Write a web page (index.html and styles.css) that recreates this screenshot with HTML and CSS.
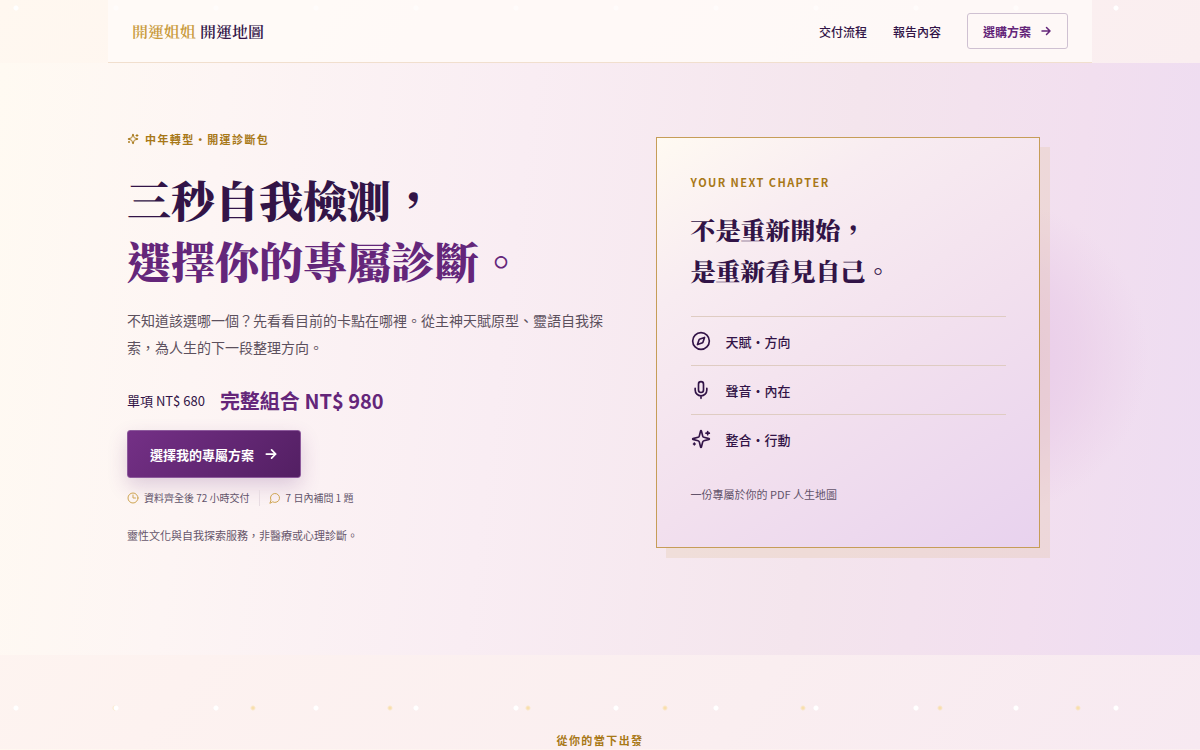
FILE: index.html
```html
<!DOCTYPE html>
<html lang="zh-Hant">
<head>
<meta charset="utf-8">
<meta name="viewport" content="width=device-width, initial-scale=1">
<title>開運姐姐 開運地圖</title>
<link rel="stylesheet" href="styles.css">
</head>
<body>
<svg class="sprite" aria-hidden="true">
  <symbol id="sparkles" viewBox="0 0 24 24"><path d="M9.94 15.5A2 2 0 0 0 8.5 14.06l-6.14-1.58a.5.5 0 0 1 0-.96L8.5 9.94A2 2 0 0 0 9.94 8.5l1.58-6.14a.5.5 0 0 1 .96 0L14.06 8.5a2 2 0 0 0 1.44 1.44l6.14 1.58a.5.5 0 0 1 0 .96L15.5 14.06a2 2 0 0 0-1.44 1.44l-1.58 6.14a.5.5 0 0 1-.96 0zM20 3v4M22 5h-4M4 17v2M5 18H3"/></symbol>
  <symbol id="arrow" viewBox="0 0 24 24"><path d="M4 12h16M13 5l7 7-7 7"/></symbol>
  <symbol id="clock" viewBox="0 0 24 24"><circle cx="12" cy="12" r="10"/><path d="M12 6v6h5"/></symbol>
  <symbol id="message" viewBox="0 0 24 24"><path d="M7.9 20A9 9 0 1 0 4 16.1L2 22z"/></symbol>
  <symbol id="compass" viewBox="0 0 24 24"><circle cx="12" cy="12" r="10"/><path d="m16.24 7.76-1.8 5.41a2 2 0 0 1-1.27 1.27l-5.41 1.8 1.8-5.41a2 2 0 0 1 1.27-1.27z"/></symbol>
  <symbol id="mic" viewBox="0 0 24 24"><rect x="9" y="2" width="6" height="13" rx="3"/><path d="M19 10v2a7 7 0 0 1-14 0v-2M12 19v3"/></symbol>
</svg>

<header class="site-header">
  <a class="brand" href="#top"><span class="brand-name">開運姐姐</span> 開運地圖</a>
  <nav class="site-nav">
    <a href="#process">交付流程</a>
    <a href="#report">報告內容</a>
    <a class="nav-cta" href="#plans">選購方案 <svg class="icon icon-small"><use href="#arrow"/></svg></a>
  </nav>
</header>

<main id="top">
  <section class="hero">
    <div class="hero-inner">
      <div class="hero-copy">
        <p class="eyebrow"><svg class="icon icon-small"><use href="#sparkles"/></svg>中年轉型・開運診斷包</p>
        <h1>三秒自我檢測，<br><span class="accent">選擇你的專屬診斷。</span></h1>
        <p class="lead">不知道該選哪一個？先看看目前的卡點在哪裡。從主神天賦原型、靈語自我探索，為人生的下一段整理方向。</p>
        <p class="prices"><span>單項 NT$ 680</span><strong>完整組合 NT$ 980</strong></p>
        <a class="hero-cta" href="#plans">選擇我的專屬方案 <svg class="icon icon-arrow"><use href="#arrow"/></svg></a>
        <ul class="facts">
          <li><svg class="icon icon-small"><use href="#clock"/></svg>資料齊全後 72 小時交付</li>
          <li><svg class="icon icon-small"><use href="#message"/></svg>7 日內補問 1 題</li>
        </ul>
        <p class="disclaimer">靈性文化與自我探索服務，非醫療或心理診斷。</p>
      </div>

      <aside class="chapter">
        <div class="chapter-card">
          <p class="chapter-label">YOUR NEXT CHAPTER</p>
          <h2>不是重新開始，<br>是重新看見自己。</h2>
          <ul class="chapter-list">
            <li><svg class="icon"><use href="#compass"/></svg>天賦・方向</li>
            <li><svg class="icon"><use href="#mic"/></svg>聲音・內在</li>
            <li><svg class="icon"><use href="#sparkles"/></svg>整合・行動</li>
          </ul>
          <p class="chapter-note">一份專屬於你的 PDF 人生地圖</p>
        </div>
      </aside>
    </div>
  </section>

  <section class="start">
    <p class="eyebrow">從你的當下出發</p>
  </section>
</main>
</body>
</html>
```
FILE: styles.css
```css
:root {
  --ink: #321447;
  --purple: #64267a;
  --gold: #a87817;
  --gold-line: #c69d58;
  --sans: "Noto Sans CJK TC", "Noto Sans", sans-serif;
  --serif: "Noto Serif TC", "Noto Serif CJK TC", "Source Han Serif TC", serif;
}

* { box-sizing: border-box; }

body {
  margin: 0;
  color: var(--ink);
  font-family: var(--sans);
  font-size: 13px;
  background:
    radial-gradient(circle at 16px 8px, #fff 0 2px, transparent 3px) 0 0 / 100px 100px,
    radial-gradient(circle at 115px 158px, #f8dfac 0 1px, transparent 3px) 0 0 / 275px 275px,
    radial-gradient(circle at 253px 158px, #f8dfac 0 1px, transparent 3px) 0 0 / 275px 275px,
    linear-gradient(125deg, #fff8f0 0%, #fdf2f0 38%, #faeef0 72%, #f7e9f1 100%);
}

h1, h2, p, ul { margin: 0; }
ul { padding: 0; list-style: none; }
a { color: inherit; text-decoration: none; }

.sprite { position: absolute; width: 0; height: 0; }

.icon {
  flex: none;
  width: 20px;
  height: 20px;
  fill: none;
  stroke: currentColor;
  stroke-width: 2;
  stroke-linecap: round;
  stroke-linejoin: round;
}
.icon-small { width: 12px; height: 12px; }
.icon-arrow { width: 14px; height: 14px; }
.nav-cta .icon, .hero-cta .icon { stroke-width: 3; }

.site-header {
  display: flex;
  align-items: center;
  justify-content: space-between;
  max-width: 984px;
  margin: 0 auto;
  padding: 13px 24px;
  border-bottom: 1px solid #f1dfce;
  background: rgba(255, 251, 249, .75);
}

.brand {
  font-family: var(--serif);
  font-size: 16px;
  font-weight: 600;
}
.brand-name { color: #c99a3d; }

.site-nav {
  display: flex;
  align-items: center;
  gap: 26px;
  font-size: 12px;
  font-weight: 500;
}
.nav-cta {
  display: flex;
  align-items: center;
  gap: 9px;
  height: 36px;
  padding: 0 15px;
  border: 1px solid #cfc1d2;
  border-radius: 3px;
  color: var(--purple);
  font-weight: 700;
}

.hero {
  padding: 67px 24px 107px;
  background: linear-gradient(97deg, #fffaf2 0%, #fdf5f4 18%, #f9edf3 42%, #f4e5ed 68%, #f2dfef 86%, #eddcf2 100%);
}
.hero-inner {
  display: grid;
  grid-template-columns: minmax(0, 5fr) minmax(0, 4fr);
  align-items: start;
  gap: 48px;
  max-width: 946px;
  margin: 0 auto;
  padding-right: 33px;
}

.eyebrow, .chapter-label {
  color: var(--gold);
  font-size: 11px;
  font-weight: 700;
  line-height: 18px;
  letter-spacing: .13em;
}
.hero .eyebrow {
  display: flex;
  align-items: center;
  gap: 6px;
}

h1 {
  margin-top: 21px;
  font-family: var(--serif);
  font-size: 44px;
  font-weight: 900;
  line-height: 61px;
}
.accent { color: var(--purple); }

.lead {
  margin-top: 16px;
  color: #5c505d;
  font-size: 14px;
  line-height: 27px;
}

.prices {
  display: flex;
  align-items: center;
  gap: 15px;
  margin-top: 25px;
  line-height: 30px;
}
.prices strong {
  color: var(--purple);
  font-size: 20px;
  font-weight: 700;
}

.hero-cta {
  display: inline-flex;
  align-items: center;
  gap: 10px;
  height: 48px;
  margin-top: 14px;
  padding: 0 22px;
  border: 1px solid #8d5a9c;
  border-radius: 3px;
  background: linear-gradient(135deg, #743086, #531f63);
  box-shadow: 0 8px 20px rgba(100, 38, 122, .2);
  color: #fff;
  font-weight: 700;
}

.facts {
  display: flex;
  margin-top: 12px;
  color: #62536a;
  font-size: 10px;
  line-height: 16px;
}
.facts li {
  display: flex;
  align-items: center;
  gap: 5px;
}
.facts li + li {
  margin-left: 9px;
  padding-left: 9px;
  border-left: 1px solid #e8dce2;
}
.facts .icon { color: #cfa552; }

.disclaimer {
  margin-top: 20px;
  color: #66566b;
  font-size: 11px;
  line-height: 18px;
}

.chapter {
  position: relative;
  margin-top: 7px;
}
.chapter::before {
  content: "";
  position: absolute;
  top: 60px;
  right: -110px;
  width: 320px;
  height: 320px;
  border-radius: 50%;
  background: radial-gradient(circle, #e8c9e8 0%, rgba(234, 206, 233, .7) 40%, rgba(240, 220, 240, 0) 70%);
}
.chapter-card {
  position: relative;
  padding: 35px 33px 45px 34px;
  border: 1px solid var(--gold-line);
  background: linear-gradient(145deg, #fffaf2 0%, #f8ecf1 25%, #f2e0ee 58%, #e8d2ee 100%);
  box-shadow: 10px 10px 0 rgba(225, 190, 150, .25);
}
.chapter-card h2 {
  margin-top: 18px;
  font-family: var(--serif);
  font-size: 25px;
  font-weight: 900;
  line-height: 41px;
}
.chapter-list { margin-top: 25px; }
.chapter-list li {
  display: flex;
  align-items: center;
  gap: 15px;
  height: 49px;
  border-top: 1px solid #dfccc2;
  font-weight: 500;
}
.chapter-note {
  margin-top: 23px;
  color: #62536a;
  font-size: 11px;
  line-height: 16px;
}

.start {
  padding: 76px 24px 0;
  text-align: center;
}
```
